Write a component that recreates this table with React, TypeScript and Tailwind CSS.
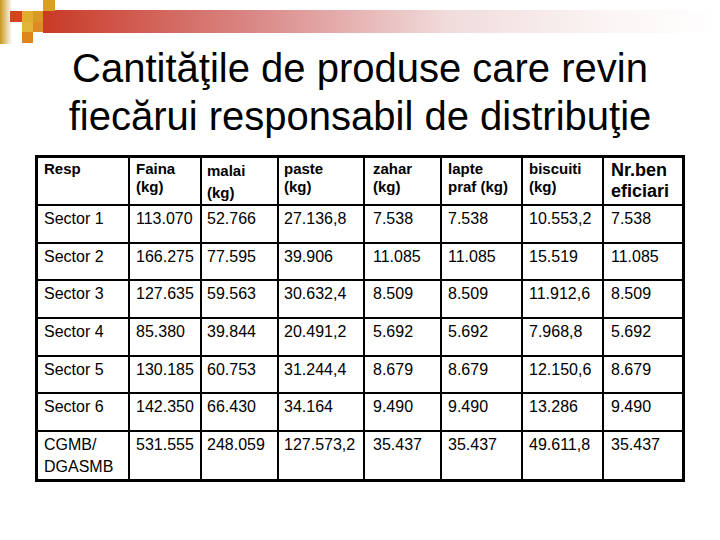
import React from "react";

const cols = [90, 70, 75, 84, 75, 79, 79, 78];
const pads = [6, 6, 5, 5, 8, 6, 6, 7];

const headers: { lines: string[]; cls?: string }[] = [
  { lines: ["Resp"] },
  { lines: ["Faina", "(kg)"] },
  { lines: ["malai", "(kg)"], cls: "leading-[22px] pt-0" },
  { lines: ["paste", "(kg)"] },
  { lines: ["zahar", "(kg)"] },
  { lines: ["lapte", "praf (kg)"] },
  { lines: ["biscuiti", "(kg)"] },
  { lines: ["Nr.ben", "eficiari"], cls: "text-[18px] leading-[21px]" },
];

const rows: string[][] = [
  ["Sector 1", "113.070", "52.766", "27.136,8", "7.538", "7.538", "10.553,2", "7.538"],
  ["Sector 2", "166.275", "77.595", "39.906", "11.085", "11.085", "15.519", "11.085"],
  ["Sector 3", "127.635", "59.563", "30.632,4", "8.509", "8.509", "11.912,6", "8.509"],
  ["Sector 4", "85.380", "39.844", "20.491,2", "5.692", "5.692", "7.968,8", "5.692"],
  ["Sector 5", "130.185", "60.753", "31.244,4", "8.679", "8.679", "12.150,6", "8.679"],
  ["Sector 6", "142.350", "66.430", "34.164", "9.490", "9.490", "13.286", "9.490"],
  ["CGMB/\nDGASMB", "531.555", "248.059", "127.573,2", "35.437", "35.437", "49.611,8", "35.437"],
];

function Header() {
  return (
    <svg width="720" height="44" viewBox="0 0 720 44" className="block">
      <defs>
        <linearGradient id="bar" x1="0" y1="0" x2="1" y2="0">
          <stop offset="0" stopColor="#c93a26" />
          <stop offset="0.3" stopColor="#d98583" />
          <stop offset="0.6" stopColor="#f1dcdc" />
          <stop offset="0.85" stopColor="#fcf6f6" />
          <stop offset="1" stopColor="#ffffff" />
        </linearGradient>
        <linearGradient id="gold" x1="0" y1="0" x2="1" y2="0">
          <stop offset="0" stopColor="#c8961e" />
          <stop offset="1" stopColor="#ffffff" />
        </linearGradient>
      </defs>
      <rect x="0" y="0" width="12" height="44" fill="url(#gold)" />
      <rect x="43" y="10" width="677" height="23" fill="url(#bar)" />
      <rect x="43" y="0" width="12" height="11" fill="#d9a01c" />
      <rect x="10" y="11" width="12" height="11" fill="#d5431a" />
      <rect x="22" y="11" width="11" height="11" fill="#dfae2e" />
      <rect x="33" y="11" width="10" height="11" fill="#d99a24" />
      <rect x="22" y="22" width="11" height="10" fill="#e2b438" />
      <rect x="33" y="22" width="10" height="10" fill="#dc8a22" />
      <rect x="22" y="32" width="11" height="11" fill="#de861c" />
    </svg>
  );
}

export default function App() {
  const gridCols = "grid-cols-[90px_70px_75px_84px_75px_79px_79px_78px]";
  return (
    <div
      className="w-[720px] h-[540px] bg-white text-black overflow-hidden"
      style={{ fontFamily: '"Liberation Sans", Arial, sans-serif' }}
    >
      <Header />
      <h1 className="text-center text-[40px] leading-[48px] font-normal">
        Cantităţile de produse care revin
        <br />
        fiecărui responsabil de distribuţie
      </h1>
      <div className="ml-[35px] mt-[15px] w-[650px]">
        <div
          className={`grid ${gridCols} grid-rows-[46px_repeat(6,35.7px)_47px] gap-[2px] bg-black p-[3px]`}
        >
          {headers.map((h, i) => (
            <div
              key={"h" + i}
              className={`bg-white font-bold text-[15px] leading-[18px] pt-[2px] ${h.cls ?? ""}`}
              style={{ paddingLeft: pads[i] }}
            >
              {h.lines.map((l, j) => (
                <div key={j}>{l}</div>
              ))}
            </div>
          ))}
          {rows.map((r, ri) =>
            r.map((c, ci) => (
              <div
                key={ri + "-" + ci}
                className="bg-white text-[16px] leading-[22px] pt-[2px] whitespace-pre-line"
                style={{ paddingLeft: pads[ci] }}
              >
                {c}
              </div>
            ))
          )}
        </div>
      </div>
      <div className="hidden">{cols.join(",")}</div>
    </div>
  );
}
